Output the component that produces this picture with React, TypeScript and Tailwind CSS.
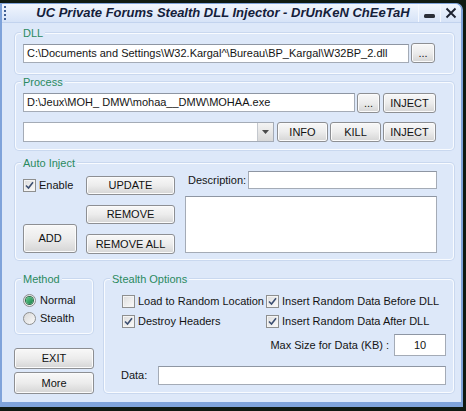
import React from 'react';

const ui = "font-['Liberation_Sans','Arial',sans-serif] text-[11px] text-[#141414]";

function Btn({ children, className = '' }: { children: React.ReactNode; className?: string }) {
  return (
    <button
      className={`flex items-center justify-center whitespace-nowrap rounded-[3px] border border-[#8d8f93] bg-linear-to-b from-[#f8f8f8] via-[#ececec] to-[#d5d5d5] leading-none text-[#111] shadow-[inset_0_0_0_1px_#fbfbfb] ${className}`}
    >
      {children}
    </button>
  );
}

function TextBox({ value = '', className = '', center = false }: { value?: string; className?: string; center?: boolean }) {
  return (
    <div
      className={`flex items-center border border-[#a4abb6] border-t-[#8e96a3] bg-white px-[3px] leading-none whitespace-nowrap overflow-hidden ${center ? 'justify-center' : ''} ${className}`}
    >
      {value}
    </div>
  );
}

function Check({ checked, label }: { checked: boolean; label: string }) {
  return (
    <div className="flex items-center gap-[3px] whitespace-nowrap leading-none">
      <span className="flex h-[13px] w-[13px] shrink-0 items-center justify-center border border-[#8e8f8f] bg-linear-to-br from-[#dcdcdc] to-[#fbfbfb] shadow-[inset_0_0_0_1px_#f4f4f4]">
        {checked && (
          <svg width="9" height="9" viewBox="0 0 9 9">
            <path d="M1 4.5 L3.5 7 L8 1.2" fill="none" stroke="#3c4f72" strokeWidth="1.6" />
          </svg>
        )}
      </span>
      <span>{label}</span>
    </div>
  );
}

function Radio({ checked, label }: { checked: boolean; label: string }) {
  return (
    <div className="flex items-center gap-[4px] leading-none">
      <span className="flex h-[13px] w-[13px] items-center justify-center rounded-full border border-[#8e8f8f] bg-linear-to-br from-[#d8d8d8] to-[#fafafa]">
        {checked && <span className="h-[7px] w-[7px] rounded-full bg-linear-to-br from-[#62d08e] to-[#16804a] shadow-[0_0_0_1px_#2d6d4a]" />}
      </span>
      <span>{label}</span>
    </div>
  );
}

function Group({ label, className = '', children }: { label: string; className?: string; children: React.ReactNode }) {
  return (
    <div className={`relative rounded-[4px] border border-[#f8fbff] shadow-[0_0_0_1px_#c9d8ef] ${className}`}>
      <span className="absolute -top-[8px] left-[5px] bg-[#dde8f9] px-[2px] leading-[14px] text-[#2a8a5f]">{label}</span>
      {children}
    </div>
  );
}

export default function App() {
  return (
    <div className={`h-[411px] w-[466px] overflow-hidden bg-[#0f1a12] ${ui}`}>
      <div className="mt-[3px] flex h-[404px] w-[463px] flex-col rounded-tr-[7px] border-x-2 border-t border-b-[5px] border-[#7fa3da] bg-[#dde8f9]">
        {/* Title bar */}
        <div className="flex h-[19px] items-center rounded-tr-[6px] border-b border-[#c2d3ee] bg-linear-to-b from-[#f1f6fe] to-[#d6e3f7]">
          <div className="ml-[2px] flex w-[4px] flex-col gap-[2px]">
            <span className="h-[2px] w-[2px] bg-[#3f5f94]" />
            <span className="h-[2px] w-[2px] bg-[#3f5f94]" />
            <span className="h-[2px] w-[2px] bg-[#3f5f94]" />
            <span className="h-[2px] w-[2px] bg-[#3f5f94]" />
          </div>
          <div className="flex-1 pl-[20px] text-center font-['Liberation_Sans',sans-serif] text-[13px] font-bold italic text-[#14203a]">
            UC Private Forums Stealth DLL Injector - DrUnKeN ChEeTaH
          </div>
          <div className="flex h-full w-[22px] items-center justify-center border-l border-[#f4f8ff]">
            <svg width="13" height="12" viewBox="0 0 13 12">
              <rect x="1" y="7" width="11" height="4" rx="1.5" fill="#2b2f38" />
            </svg>
          </div>
          <div className="flex h-full items-center border-l border-[#f4f8ff] px-[4px]">
            <svg width="12" height="12" viewBox="0 0 12 12">
              <path d="M1.5 1.5 L10.5 10.5 M10.5 1.5 L1.5 10.5" stroke="#1d2230" strokeWidth="1.9" />
            </svg>
          </div>
        </div>

        {/* Body */}
        <div className="pl-[13px]">
          <Group label="DLL" className="mt-[10px] h-[41px] w-[439px]">
            <div className="flex gap-[2px] pl-[7px] pt-[10px]">
              <TextBox value="C:\Documents and Settings\W32.Kargal^\Bureau\BP_Kargal\W32BP_2.dll" className="h-[19px] w-[386px]" />
              <Btn className="-mt-[1px] h-[20px] w-[24px]">...</Btn>
            </div>
          </Group>

          <Group label="Process" className="mt-[8px] h-[68px] w-[439px]">
            <div className="flex pl-[7px] pt-[10px]">
              <TextBox value="D:\Jeux\MOH_ DMW\mohaa__DMW\MOHAA.exe" className="h-[19px] w-[332px]" />
              <Btn className="ml-[2px] h-[20px] w-[23px]">...</Btn>
              <Btn className="ml-[3px] h-[20px] w-[53px]">INJECT</Btn>
            </div>
            <div className="mt-[9px] flex pl-[7px]">
              <div className="flex h-[20px] w-[251px] border border-[#a4abb6] bg-white">
                <div className="flex-1" />
                <div className="flex w-[16px] items-center justify-center border-l border-[#c4c8ce] bg-linear-to-b from-[#f4f4f4] to-[#d9d9d9]">
                  <svg width="7" height="4" viewBox="0 0 7 4">
                    <path d="M0 0 H7 L3.5 4 Z" fill="#4a4a4a" />
                  </svg>
                </div>
              </div>
              <Btn className="ml-[3px] h-[20px] w-[51px]">INFO</Btn>
              <Btn className="ml-[2px] h-[20px] w-[51px]">KILL</Btn>
              <Btn className="ml-[2px] h-[20px] w-[53px]">INJECT</Btn>
            </div>
          </Group>

          <Group label="Auto Inject" className="mt-[13px] h-[97px] w-[439px]">
            <div className="flex pl-[7px]">
              <div className="flex w-[63px] flex-col">
                <div className="mt-[15px]">
                  <Check checked label="Enable" />
                </div>
                <Btn className="mt-[32px] h-[29px] w-[54px]">ADD</Btn>
              </div>
              <div className="flex w-[89px] flex-col">
                <Btn className="mt-[12px] h-[19px] w-[89px]">UPDATE</Btn>
                <Btn className="mt-[10px] h-[19px] w-[89px]">REMOVE</Btn>
                <Btn className="mt-[10px] h-[20px] w-[89px]">REMOVE ALL</Btn>
              </div>
              <div className="ml-[10px] flex w-[252px] flex-col">
                <div className="mt-[7px] flex items-center">
                  <span className="ml-[3px] w-[60px] whitespace-nowrap">Description:</span>
                  <TextBox className="h-[18px] w-[189px]" />
                </div>
                <TextBox className="mt-[7px] h-[57px] w-[252px]" />
              </div>
            </div>
          </Group>

          <div className="mt-[19px] flex">
            <div className="flex w-[79px] flex-col">
              <Group label="Method" className="h-[55px] w-[78px]">
                <div className="flex flex-col gap-[5px] pl-[7px] pt-[14px]">
                  <Radio checked label="Normal" />
                  <Radio checked={false} label="Stealth" />
                </div>
              </Group>
              <Btn className="-ml-[1px] mt-[14px] h-[21px] w-[80px]">EXIT</Btn>
              <Btn className="-ml-[1px] mt-[3px] h-[22px] w-[80px]">More</Btn>
            </div>
            <Group label="Stealth Options" className="ml-[10px] h-[114px] w-[350px]">
              <div className="grid grid-cols-[144px_1fr] gap-y-[7px] pl-[17px] pt-[15px]">
                <Check checked={false} label="Load to Random Location" />
                <Check checked label="Insert Random Data Before DLL" />
                <Check checked label="Destroy Headers" />
                <Check checked label="Insert Random Data After DLL" />
              </div>
              <div className="mt-[6px] flex items-center justify-end pr-[7px]">
                <span className="mr-[5px] whitespace-nowrap">Max Size for Data (KB) :</span>
                <TextBox value="10" center className="h-[22px] w-[52px]" />
              </div>
              <div className="mt-[10px] flex items-center pl-[16px]">
                <span className="w-[37px]">Data:</span>
                <TextBox className="h-[19px] w-[288px]" />
              </div>
            </Group>
          </div>
        </div>
      </div>
    </div>
  );
}
